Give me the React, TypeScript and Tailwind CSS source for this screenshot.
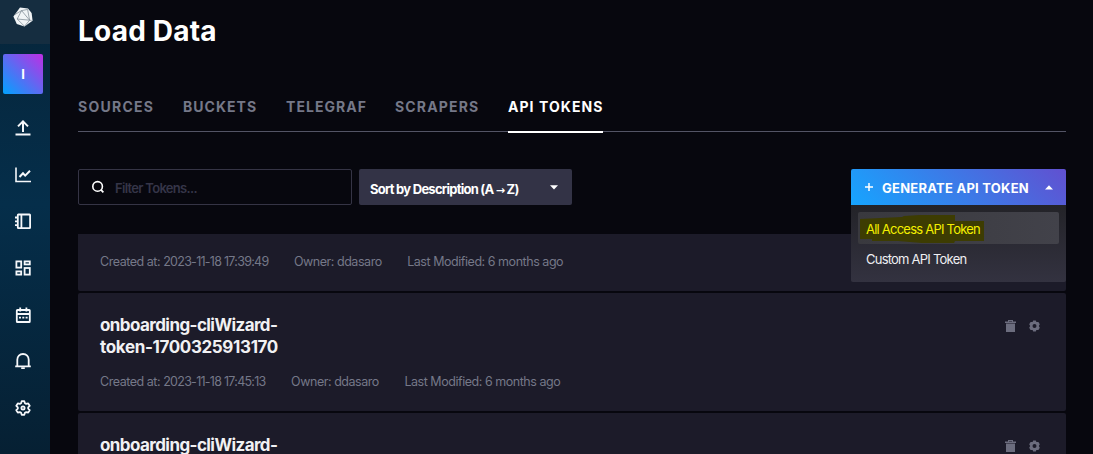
import React from "react";

const stroke = {
  fill: "none",
  stroke: "currentColor",
  strokeWidth: 2,
} as const;

function Logo() {
  return (
    <svg width="20" height="20" viewBox="0 0 20 20">
      <path d="M7 0.6 15 1.6 18.6 6 19.6 13.8 11.5 19.5 3.8 17 0.4 9.4Z" fill="#f1f4f6" />
      <path
        d="M8.6 3.6 4.2 12 11.5 19.3M4.2 12 18.6 13.4M14.6 2.4 8.6 3.6M14.6 2.4 16.6 13.2 11.5 19.3M1.8 7.6 8.6 3.6 16.6 13.2"
        fill="none"
        stroke="#75828c"
        strokeWidth="0.7"
      />
    </svg>
  );
}

function NavIcon({ name }: { name: string }) {
  return (
    <svg width="16" height="16" viewBox="0 0 16 16" className="block text-[#f6f8fb]">
      {name === "upload" && (
        <g {...stroke}>
          <path d="M0.5 14.5H15.5M8 12V1.6M3 6.4 8 1.4 13 6.4" />
        </g>
      )}
      {name === "graph" && (
        <g {...stroke} strokeWidth={1.6}>
          <path d="M1 0.5V14.5H16" />
          <path d="M4.5 10 8 6.2 10.2 8.6 15 3.8" strokeWidth={2} />
        </g>
      )}
      {name === "book" && (
        <g {...stroke} strokeWidth={1.8}>
          <rect x="2.8" y="1.5" width="12.3" height="13.6" rx="0.6" />
          <path d="M6.4 1.3V15.3M0 4.5H3M0 8.3H3M0 12.1H3" />
        </g>
      )}
      {name === "boards" && (
        <g {...stroke} strokeWidth={1.8}>
          <rect x="1.4" y="1.4" width="4.8" height="6.2" />
          <rect x="9.6" y="1.4" width="5.2" height="3" />
          <rect x="1.4" y="11.4" width="4.8" height="3.2" />
          <rect x="9.6" y="8" width="5.2" height="6.6" />
        </g>
      )}
      {name === "calendar" && (
        <g {...stroke} strokeWidth={1.8}>
          <rect x="1.8" y="3" width="13" height="12" rx="0.6" />
          <path d="M1.8 7H14.8M5.2 0.5V4.5M11.4 0.5V4.5" />
          <path d="M4 10.6H6M7.3 10.6H9.3M10.6 10.6H12.6" />
        </g>
      )}
      {name === "bell" && (
        <g {...stroke} strokeWidth={1.8}>
          <path d="M0.2 13.4H15.8M2.3 13.4V6.8C2.3 3.4 4.6 1 8 1S13.7 3.4 13.7 6.8V13.4" />
          <path d="M6.2 15.2H9.8" />
        </g>
      )}
      {name === "cog" && (
        <g {...stroke} strokeWidth={1.8} strokeLinejoin="round">
          <path d="M6.7 1.2H9.3L9.9 3.2 11.2 3.9 13.2 3.4 14.7 5.8 13.2 7.3V8.7L14.7 10.2 13.2 12.6 11.2 12.1 9.9 12.8 9.3 14.8H6.7L6.1 12.8 4.8 12.1 2.8 12.6 1.3 10.2 2.8 8.7V7.3L1.3 5.8 2.8 3.4 4.8 3.9 6.1 3.2Z" />
          <circle cx="8" cy="8" r="1.6" />
        </g>
      )}
    </svg>
  );
}

const navItems = ["upload", "graph", "book", "boards", "calendar", "bell", "cog"];

function Sidebar() {
  return (
    <nav className="flex h-full w-[50px] shrink-0 flex-col bg-linear-to-b/srgb from-[#06253a] via-[#052e4a] via-45% to-[#062033]">
      <div className="flex h-[44px] w-full shrink-0 justify-center bg-[#152d40] pt-[7px] pr-[4px]">
        <Logo />
      </div>
      <div className="mt-[10px] ml-[3px] flex size-10 shrink-0 items-center justify-center rounded-[2px] bg-linear-45/srgb from-[#00a3ff] to-[#be2ee4] pt-[2px] text-[13px] font-bold text-white">
        I
      </div>
      <div className="mt-[10.5px] flex w-[46px] flex-col">
        {navItems.map((n) => (
          <div key={n} className="flex h-[46.7px] items-center justify-center">
            <NavIcon name={n} />
          </div>
        ))}
      </div>
    </nav>
  );
}

function Tabs() {
  const base = "h-full whitespace-nowrap text-[14px] leading-[18px] font-bold pt-[9px]";
  return (
    <div className="mt-[41px] flex h-[43px] border-b border-[#535465] text-[#757888]">
      <div className={`${base} w-[105px] tracking-[1.25px]`}>SOURCES</div>
      <div className={`${base} w-[103px] tracking-[1.02px]`}>BUCKETS</div>
      <div className={`${base} w-[109px] tracking-[1.05px]`}>TELEGRAF</div>
      <div className={`${base} w-[113px] tracking-[1.15px]`}>SCRAPERS</div>
      <div className="h-[44px] w-[95px] border-b-2 border-white pt-[9px] text-[14px] leading-[18px] font-bold tracking-[1.05px] whitespace-nowrap text-white">
        API TOKENS
      </div>
    </div>
  );
}

function Caret({ up = false }: { up?: boolean }) {
  return (
    <svg width="8" height="5" viewBox="0 0 8 5" className="block shrink-0">
      <path d={up ? "M0 4.5 4 0.3 8 4.5Z" : "M0 0.3H8L4 4.5Z"} fill="#fff" />
    </svg>
  );
}

function GenerateMenu() {
  return (
    <div className="relative h-9 w-[215px]">
      <button className="flex h-9 w-full items-center rounded-t-[2px] bg-linear-45/srgb from-[#16a5ff] to-[#6150d0] pl-[14px] text-white">
        <svg width="8" height="8" viewBox="0 0 8 8" className="block">
          <path d="M4 0V8M0 4H8" stroke="#fff" strokeWidth="1.5" />
        </svg>
        <span className="ml-[9px] w-[152px] pt-[3px] text-left text-[13px] font-bold tracking-[0.25px] whitespace-nowrap">
          GENERATE API TOKEN
        </span>
        <span className="ml-[11px]">
          <Caret up />
        </span>
      </button>
      <div className="absolute top-9 left-0 z-10 h-[77px] w-full rounded-b-[2px] bg-linear-to-b/srgb from-[#232328] to-[#333240] px-[7px] pt-[7px] text-[13px] tracking-[-0.77px]">
        <div className="relative flex h-8 items-center rounded-[2px] bg-linear-to-r/srgb from-[#39393e] to-[#42424a] pt-[3px] pl-2">
          <svg width="125" height="29" viewBox="0 0 125 29" className="absolute top-[2px] left-[2px]">
            <path d="M0 5 42 3 44 2 60 1H95V7H124V27H95L94 29H62L38 27H12V25H0Z" fill="#3d3c02" />
          </svg>
          <span className="relative text-[#f4f000]">All Access API Token</span>
        </div>
        <div className="flex h-[31px] items-center pt-[1px] pl-2 text-[#eeeef2]">
          <span>Custom API Token</span>
        </div>
      </div>
    </div>
  );
}

function Toolbar() {
  return (
    <div className="mt-[37px] flex h-9 shrink-0">
      <div className="flex w-[274px] items-center rounded-[2px] border border-[#353445] pl-[12px]">
        <svg width="14" height="14" viewBox="0 0 14 14" className="block">
          <circle cx="6.6" cy="6.4" r="4.8" fill="none" stroke="#fff" strokeWidth="1.6" />
          <path d="M9.8 9.6 12.4 12.4" stroke="#fff" strokeWidth="1.7" />
        </svg>
        <span className="ml-[10px] pt-[3px] text-[13px] font-semibold tracking-[-0.7px] text-[#353548]">
          Filter Tokens...
        </span>
      </div>
      <div className="ml-[7px] flex w-[213px] items-center justify-between rounded-[2px] bg-[#333346] pr-[14px] pl-[11px]">
        <span className="pt-[3px] text-[13px] leading-[18px] font-bold tracking-[-0.75px] whitespace-nowrap text-white">
          Sort by Description (A <span className="font-['DejaVu_Sans',sans-serif] text-[11px] leading-none">→</span> Z)
        </span>
        <Caret />
      </div>
      <div className="ml-auto">
        <GenerateMenu />
      </div>
    </div>
  );
}

function Meta({ created }: { created: string }) {
  return (
    <div className="flex gap-[25.5px] text-[12.5px] leading-[16px] tracking-[-0.46px] whitespace-nowrap text-[#757888]">
      <span>
        Created at: <span className="tracking-[-0.73px]">{created}</span>
      </span>
      <span>Owner: ddasaro</span>
      <span>Last Modified: 6 months ago</span>
    </div>
  );
}

function CardActions() {
  return (
    <div className="flex gap-[12.5px] pt-[5.5px] text-[#6c6d7e]">
      <svg width="11" height="12" viewBox="0 0 11 12">
        <path d="M3 0H8V1.5H11V3H0V1.5H3ZM4 1V1.6H7V1ZM1 3.6H10V12H1Z" fill="currentColor" fillRule="evenodd" />
      </svg>
      <svg width="11" height="12" viewBox="0 0 11 12">
        <path
          d="M4.2 0.5H6.8L7.4 2.1 9.4 1.9 10.8 4.2 9.8 6 10.8 7.8 9.4 10.1 7.4 9.9 6.8 11.5H4.2L3.6 9.9 1.6 10.1 0.2 7.8 1.2 6 0.2 4.2 1.6 1.9 3.6 2.1ZM5.5 4A2 2 0 1 0 5.5 8 2 2 0 1 0 5.5 4Z"
          fill="currentColor"
          fillRule="evenodd"
        />
      </svg>
    </div>
  );
}

function TokenCard({ suffix, created }: { suffix?: string; created?: string }) {
  return (
    <div className="flex h-[118px] shrink-0 justify-between rounded-[2px] bg-[#1c1b29] pt-[21px] pr-[26.5px] pl-[22px]">
      <div>
        <h3 className="text-[17px] leading-[22px] font-bold text-[#f1f1f3]">
          <span className="block tracking-[-0.58px]">onboarding-cliWizard-</span>
          {suffix && <span className="block tracking-[-0.36px]">token-{suffix}</span>}
        </h3>
        {created && (
          <div className="mt-[16px]">
            <Meta created={created} />
          </div>
        )}
      </div>
      <CardActions />
    </div>
  );
}

export default function App() {
  return (
    <div className="flex h-[454px] w-[1093px] overflow-hidden bg-[#07070e] font-['Inter',sans-serif]">
      <Sidebar />
      <main className="flex min-w-0 flex-1 flex-col pr-[27px] pl-[28px]">
        <h1 className="mt-[14px] h-[34px] text-[28px] leading-[34px] font-bold tracking-[0.2px] text-white">
          Load Data
        </h1>
        <Tabs />
        <Toolbar />
        <div className="mt-[29px] flex flex-col gap-[2px]">
          <div className="h-[57px] shrink-0 rounded-b-[2px] bg-[#1c1b29] pt-[20px] pl-[22px]">
            <Meta created="2023-11-18 17:39:49" />
          </div>
          <TokenCard suffix="1700325913170" created="2023-11-18 17:45:13" />
          <TokenCard />
        </div>
      </main>
    </div>
  );
}
